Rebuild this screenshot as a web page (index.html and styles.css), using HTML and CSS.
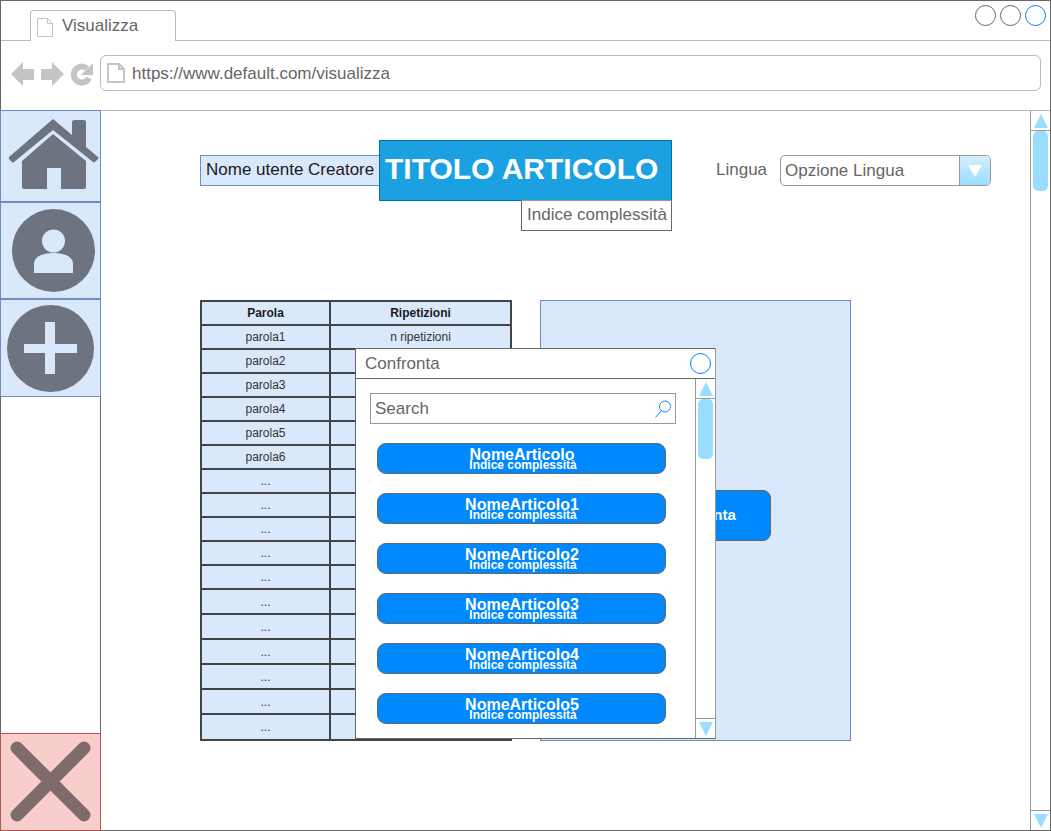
FILE: index.html
```html
<!DOCTYPE html>
<html lang="en">
<head>
    <meta charset="UTF-8">
    <title>Visualizza</title>
    <link rel="stylesheet" href="styles.css">
</head>
<body>

<div class="window">
    <div class="tabbar">
        <div class="tab">
            <svg class="doc" width="16" height="19" viewBox="0 0 16 19"><path d="M.5.5h10l5 5v13H.5z M10.5.5v5h5" fill="#fff" stroke="#c4c4c4"/></svg>
            <span>Visualizza</span>
        </div>
        <div class="controls">
            <span class="dot"></span>
            <span class="dot"></span>
            <span class="dot dot-blue"></span>
        </div>
    </div>

    <div class="navbar">
        <svg class="nav-icons" width="84" height="26" viewBox="0 0 84 26">
            <path d="M0 12 12 0v7h11v11H12v6z" fill="#c4c4c4"/>
            <path d="M53 12 41 0v7H30v11h11v6z" fill="#c4c4c4"/>
            <path d="M78 16A8 8 0 1 1 76 6.500" fill="none" stroke="#c4c4c4" stroke-width="6"/>
            <path d="M82 1V13H70z" fill="#c4c4c4"/>
        </svg>
        <div class="urlbar">
            <svg width="18" height="20" viewBox="0 0 18 20"><path d="M1 1h11l5 5v13H1z M12 1v5h5" fill="#fff" stroke="#c4c4c4" stroke-width="2"/></svg>
            <span>https://www.default.com/visualizza</span>
        </div>
    </div>

    <div class="main">
        <div class="sidebar">
            <div class="side-btn side-home">
                <svg width="90" height="71" viewBox="0 0 90 71">
                    <path d="M44 0 63 16V3q0-2 2-2h10q2 0 2 2V28L89 38q1 1 0 2l-3 3q-1 1-2 0L44 11 5 43q-1 1-2 0L0 40q-1-1 0-2z" fill="#6d7480"/>
                    <path d="M44 15 77 42V68q0 2-2 2H52V49H38V70H15q-2 0-2-2V42z" fill="#6d7480"/>
                </svg>
            </div>
            <div class="side-btn side-user">
                <svg width="83" height="83" viewBox="0 0 83 83">
                    <circle cx="41.500" cy="41.500" r="41.500" fill="#6d7480"/>
                    <circle cx="41.500" cy="32" r="11.500" fill="#dae8fc"/>
                    <path d="M22 64V55c0-7 8-11 19.500-11S61 48 61 55v9z" fill="#dae8fc"/>
                </svg>
            </div>
            <div class="side-btn side-add">
                <svg width="87" height="87" viewBox="0 0 87 87">
                    <circle cx="43.500" cy="43.500" r="43.500" fill="#6d7480"/>
                    <path d="M38 17h10v22h22v9H48v21H38V48H17v-9h21z" fill="#dae8fc"/>
                </svg>
            </div>
            <div class="side-spacer"></div>
            <div class="side-btn side-close">
                <svg width="81" height="81" viewBox="0 0 81 81">
                    <path d="M7 7 74 74M74 7 7 74" stroke="#806b6c" stroke-width="13" stroke-linecap="round"/>
                </svg>
            </div>
        </div>

        <div class="content">
            <div class="article-head">
                <div class="creator">Nome utente Creatore</div>
                <div class="title-col">
                    <h1 class="title">TITOLO ARTICOLO</h1>
                    <div class="complexity">Indice complessità</div>
                </div>
                <div class="lang">
                    <span class="lang-label">Lingua</span>
                    <div class="select">
                        <span>Opzione Lingua</span>
                        <div class="select-arrow"><i></i></div>
                    </div>
                </div>
            </div>

            <div class="article-body">
                <table class="words">
                    <thead>
                        <tr><th>Parola</th><th>Ripetizioni</th></tr>
                    </thead>
                    <tbody>
                        <tr><td>parola1</td><td>n ripetizioni</td></tr>
                        <tr><td>parola2</td><td></td></tr>
                        <tr><td>parola3</td><td></td></tr>
                        <tr><td>parola4</td><td></td></tr>
                        <tr><td>parola5</td><td></td></tr>
                        <tr><td>parola6</td><td></td></tr>
                        <tr><td>...</td><td></td></tr>
                        <tr><td>...</td><td></td></tr>
                        <tr><td>...</td><td></td></tr>
                        <tr><td>...</td><td></td></tr>
                        <tr><td>...</td><td></td></tr>
                        <tr><td>...</td><td></td></tr>
                        <tr><td>...</td><td></td></tr>
                        <tr><td>...</td><td></td></tr>
                        <tr><td>...</td><td></td></tr>
                        <tr><td>...</td><td></td></tr>
                        <tr><td>...</td><td></td></tr>
                    </tbody>
                </table>
                <div class="compare-panel">
                    <div class="compare-btn">Confronta</div>
                </div>
            </div>

            <div class="dialog">
                <div class="dialog-title">
                    <span>Confronta</span>
                    <span class="dot dot-blue"></span>
                </div>
                <div class="dialog-body">
                    <div class="dialog-list">
                        <div class="search">
                            <span>Search</span>
                            <svg width="16" height="18" viewBox="0 0 16 18"><circle cx="10" cy="6.500" r="5.500" fill="none" stroke="#0a8cff"/><path d="M6 11 .5 17.500" stroke="#0a8cff" fill="none"/></svg>
                        </div>
                        <div class="item"><b>NomeArticolo</b><small>Indice complessità</small></div>
                        <div class="item"><b>NomeArticolo1</b><small>Indice complessità</small></div>
                        <div class="item"><b>NomeArticolo2</b><small>Indice complessità</small></div>
                        <div class="item"><b>NomeArticolo3</b><small>Indice complessità</small></div>
                        <div class="item"><b>NomeArticolo4</b><small>Indice complessità</small></div>
                        <div class="item"><b>NomeArticolo5</b><small>Indice complessità</small></div>
                    </div>
                    <div class="scrollbar">
                        <div class="sb-btn"><i class="arrow-up"></i></div>
                        <div class="sb-track"><div class="sb-thumb"></div></div>
                        <div class="sb-btn sb-btn-end"><i class="arrow-down"></i></div>
                    </div>
                </div>
            </div>
        </div>

        <div class="scrollbar">
            <div class="sb-btn"><i class="arrow-up"></i></div>
            <div class="sb-track"><div class="sb-thumb"></div></div>
            <div class="sb-btn sb-btn-end"><i class="arrow-down"></i></div>
        </div>
    </div>
</div>

</body>
</html>
```

FILE: styles.css
```css
/* Basic styling for the page */
html, body {
    margin: 0;
    height: 100%;
    background-color: #fff;
}
body {
    font-family: "Liberation Sans", Arial, sans-serif;
    color: #666;
}
.window {
    width: 1051px;
    height: 831px;
    box-sizing: border-box;
    border: 1px solid #666;
    display: flex;
    flex-direction: column;
}

/* Browser chrome */
.tabbar {
    height: 40px;
    flex: none;
    box-sizing: border-box;
    border-bottom: 1px solid #bbb;
    display: flex;
    justify-content: space-between;
    padding-left: 29px;
}
.tab {
    width: 146px;
    height: 31px;
    margin-top: 9px;
    box-sizing: border-box;
    border: 1px solid #bbb;
    border-bottom: none;
    border-radius: 4px 4px 0 0;
    background-color: #fff;
    display: flex;
    align-items: center;
    padding: 2px 0 0 6px;
    font-size: 17px;
    position: relative;
    z-index: 1;
}
.tab .doc {
    margin-right: 9px;
}
.tab span {
    margin-top: -2px;
}
.controls {
    display: flex;
    gap: 4px;
    padding: 4px 4px 0 0;
}
.dot {
    display: block;
    width: 21px;
    height: 21px;
    box-sizing: border-box;
    border: 1px solid #666;
    border-radius: 50%;
}
.dot-blue {
    border-color: #007fff;
}
.navbar {
    height: 70px;
    flex: none;
    box-sizing: border-box;
    border-bottom: 1px solid #bbb;
    display: flex;
    align-items: flex-start;
    padding: 14px 9px 0 10px;
}
.nav-icons {
    margin: 7px 5px 0 0;
    flex: none;
}
.urlbar {
    flex: 1;
    height: 36px;
    box-sizing: border-box;
    border: 1px solid #bbb;
    border-radius: 6px;
    display: flex;
    align-items: center;
    gap: 7px;
    padding-left: 6px;
    font-size: 17px;
}
.urlbar span {
    margin-top: 1px;
}

/* Main area */
.main {
    flex: 1;
    display: flex;
    min-height: 0;
}
.sidebar {
    width: 101px;
    flex: none;
    box-sizing: border-box;
    margin: -1px 0 -1px -1px;
    border-right: 1px solid #666;
    display: flex;
    flex-direction: column;
}
.side-btn {
    width: 101px;
    flex: none;
    box-sizing: border-box;
    background-color: #dae8fc;
    border: 1px solid #6c8ebf;
    display: flex;
    align-items: flex-start;
    justify-content: flex-start;
}
.side-home {
    height: 92px;
    padding: 8px 0 0 8px;
}
.side-user {
    height: 97px;
    padding: 6px 0 0 11px;
}
.side-add {
    height: 98px;
    padding: 5px 0 0 6px;
}
.side-spacer {
    flex: 1;
}
.side-close {
    height: 98px;
    padding: 7px 0 0 9px;
    background-color: #f8cecc;
    border-color: #b85450;
}

.content {
    flex: 1;
    position: relative;
    padding: 29px 0 0 99px;
}
.article-head {
    display: flex;
    align-items: flex-start;
}
.creator {
    margin-top: 15px;
    width: 180px;
    height: 31px;
    flex: none;
    box-sizing: border-box;
    background-color: #dae8fc;
    border: 1px solid #6c8ebf;
    color: #1a1a1a;
    font-size: 17px;
    line-height: 27px;
    padding-left: 5px;
    white-space: nowrap;
}
.title-col {
    display: flex;
    flex-direction: column;
    align-items: flex-end;
    margin-left: -1px;
}
.title {
    width: 293px;
    height: 61px;
    box-sizing: border-box;
    margin: 0;
    background-color: #1ba1e2;
    border: 1px solid #006eaf;
    color: #fff;
    font-size: 30px;
    line-height: 55px;
    padding-left: 5px;
    white-space: nowrap;
}
.complexity {
    width: 151px;
    height: 31px;
    margin-top: -1px;
    box-sizing: border-box;
    border: 1px solid #666;
    border-top-color: #999;
    background-color: #fff;
    font-size: 17px;
    line-height: 28px;
    padding-left: 5px;
    white-space: nowrap;
}
.lang {
    display: flex;
    align-items: center;
    margin: 15px 0 0 44px;
}
.lang-label {
    font-size: 17px;
    width: 64px;
    margin-top: -2px;
}
.select {
    width: 211px;
    height: 31px;
    box-sizing: border-box;
    border: 1px solid #999;
    border-radius: 5px;
    display: flex;
    justify-content: space-between;
    font-size: 17px;
    line-height: 29px;
    padding-left: 4px;
    overflow: hidden;
}
.select-arrow {
    width: 30px;
    border-left: 1px solid #999;
    background: linear-gradient(#d5effe, #99ddff);
    display: flex;
    align-items: center;
    justify-content: center;
}
.select-arrow i {
    width: 0;
    height: 0;
    border-left: 7px solid transparent;
    border-right: 7px solid transparent;
    border-top: 12px solid #fff;
}

/* Word table and compare panel */
.article-body {
    display: flex;
    align-items: flex-start;
    margin-top: 69px;
}
.words {
    width: 312px;
    table-layout: fixed;
    border-collapse: collapse;
    border: 2px solid #444;
    font-size: 12px;
    color: #333;
    background-color: #dae8fc;
}
.words th, .words td {
    border: 2px solid #444;
    height: 24px;
    padding: 0;
    text-align: center;
    box-sizing: border-box;
}
.words th:first-child {
    width: 129px;
}
.words th {
    color: #1a1a1a;
}
.words tbody tr:nth-child(n+12) td {
    height: 25px;
}
.words tbody tr:last-child td {
    height: 26px;
}
.compare-panel {
    width: 311px;
    height: 441px;
    margin-left: 28px;
    box-sizing: border-box;
    background-color: #dae8fc;
    border: 1px solid #6c8ebf;
    padding: 189px 79px 0 80px;
}
.compare-btn {
    width: 150px;
    height: 51px;
    box-sizing: border-box;
    background-color: #0088ff;
    border: 1px solid #666;
    border-radius: 8px;
    color: #fff;
    font-size: 15px;
    font-weight: bold;
    line-height: 47px;
    text-align: center;
    padding-left: 8px;
}

/* Confronta dialog, lies over the table and panel */
.dialog {
    position: absolute;
    left: 254px;
    top: 237px;
    width: 361px;
    height: 391px;
    box-sizing: border-box;
    background-color: #fff;
    border: 1px solid #666;
    border-right-color: #999;
    display: flex;
    flex-direction: column;
}
.dialog-title {
    height: 30px;
    flex: none;
    box-sizing: border-box;
    border-bottom: 1px solid #666;
    display: flex;
    align-items: center;
    justify-content: space-between;
    padding: 0 4px 0 9px;
    font-size: 17px;
}
.dialog-body {
    flex: 1;
    display: flex;
    min-height: 0;
}
.dialog-list {
    flex: 1;
    padding: 14px 0 0 14px;
}
.search {
    width: 306px;
    height: 31px;
    box-sizing: border-box;
    border: 1px solid #999;
    display: flex;
    align-items: center;
    justify-content: space-between;
    padding: 0 4px;
    font-size: 17px;
    margin-bottom: 19px;
}
.item {
    width: 289px;
    height: 31px;
    margin: 0 0 19px 7px;
    box-sizing: border-box;
    background-color: #0088ff;
    border: 1px solid #666;
    border-radius: 9px;
    color: #fff;
    text-align: center;
    font-weight: bold;
    display: flex;
    flex-direction: column;
    align-items: center;
    padding: 3px 0 0 1px;
}
.item b {
    font-size: 16px;
    line-height: 16px;
}
.item small {
    font-size: 12px;
    line-height: 4px;
    margin-left: 2px;
}

/* Scrollbars */
.scrollbar {
    width: 20px;
    flex: none;
    box-sizing: border-box;
    border-left: 1px solid #999;
    display: flex;
    flex-direction: column;
}
.sb-btn {
    height: 20px;
    flex: none;
    box-sizing: border-box;
    border-bottom: 1px solid #999;
    display: flex;
    align-items: center;
    justify-content: center;
}
.sb-btn-end {
    border-bottom: none;
    border-top: 1px solid #999;
}
.sb-track {
    flex: 1;
    padding-left: 2px;
}
.sb-thumb {
    width: 15px;
    height: 60px;
    background-color: #99ddff;
    border-radius: 5px;
}
.arrow-up, .arrow-down {
    width: 0;
    height: 0;
    border-left: 7px solid transparent;
    border-right: 7px solid transparent;
}
.arrow-up {
    border-bottom: 14px solid #99ddff;
}
.arrow-down {
    border-top: 14px solid #99ddff;
}
```
